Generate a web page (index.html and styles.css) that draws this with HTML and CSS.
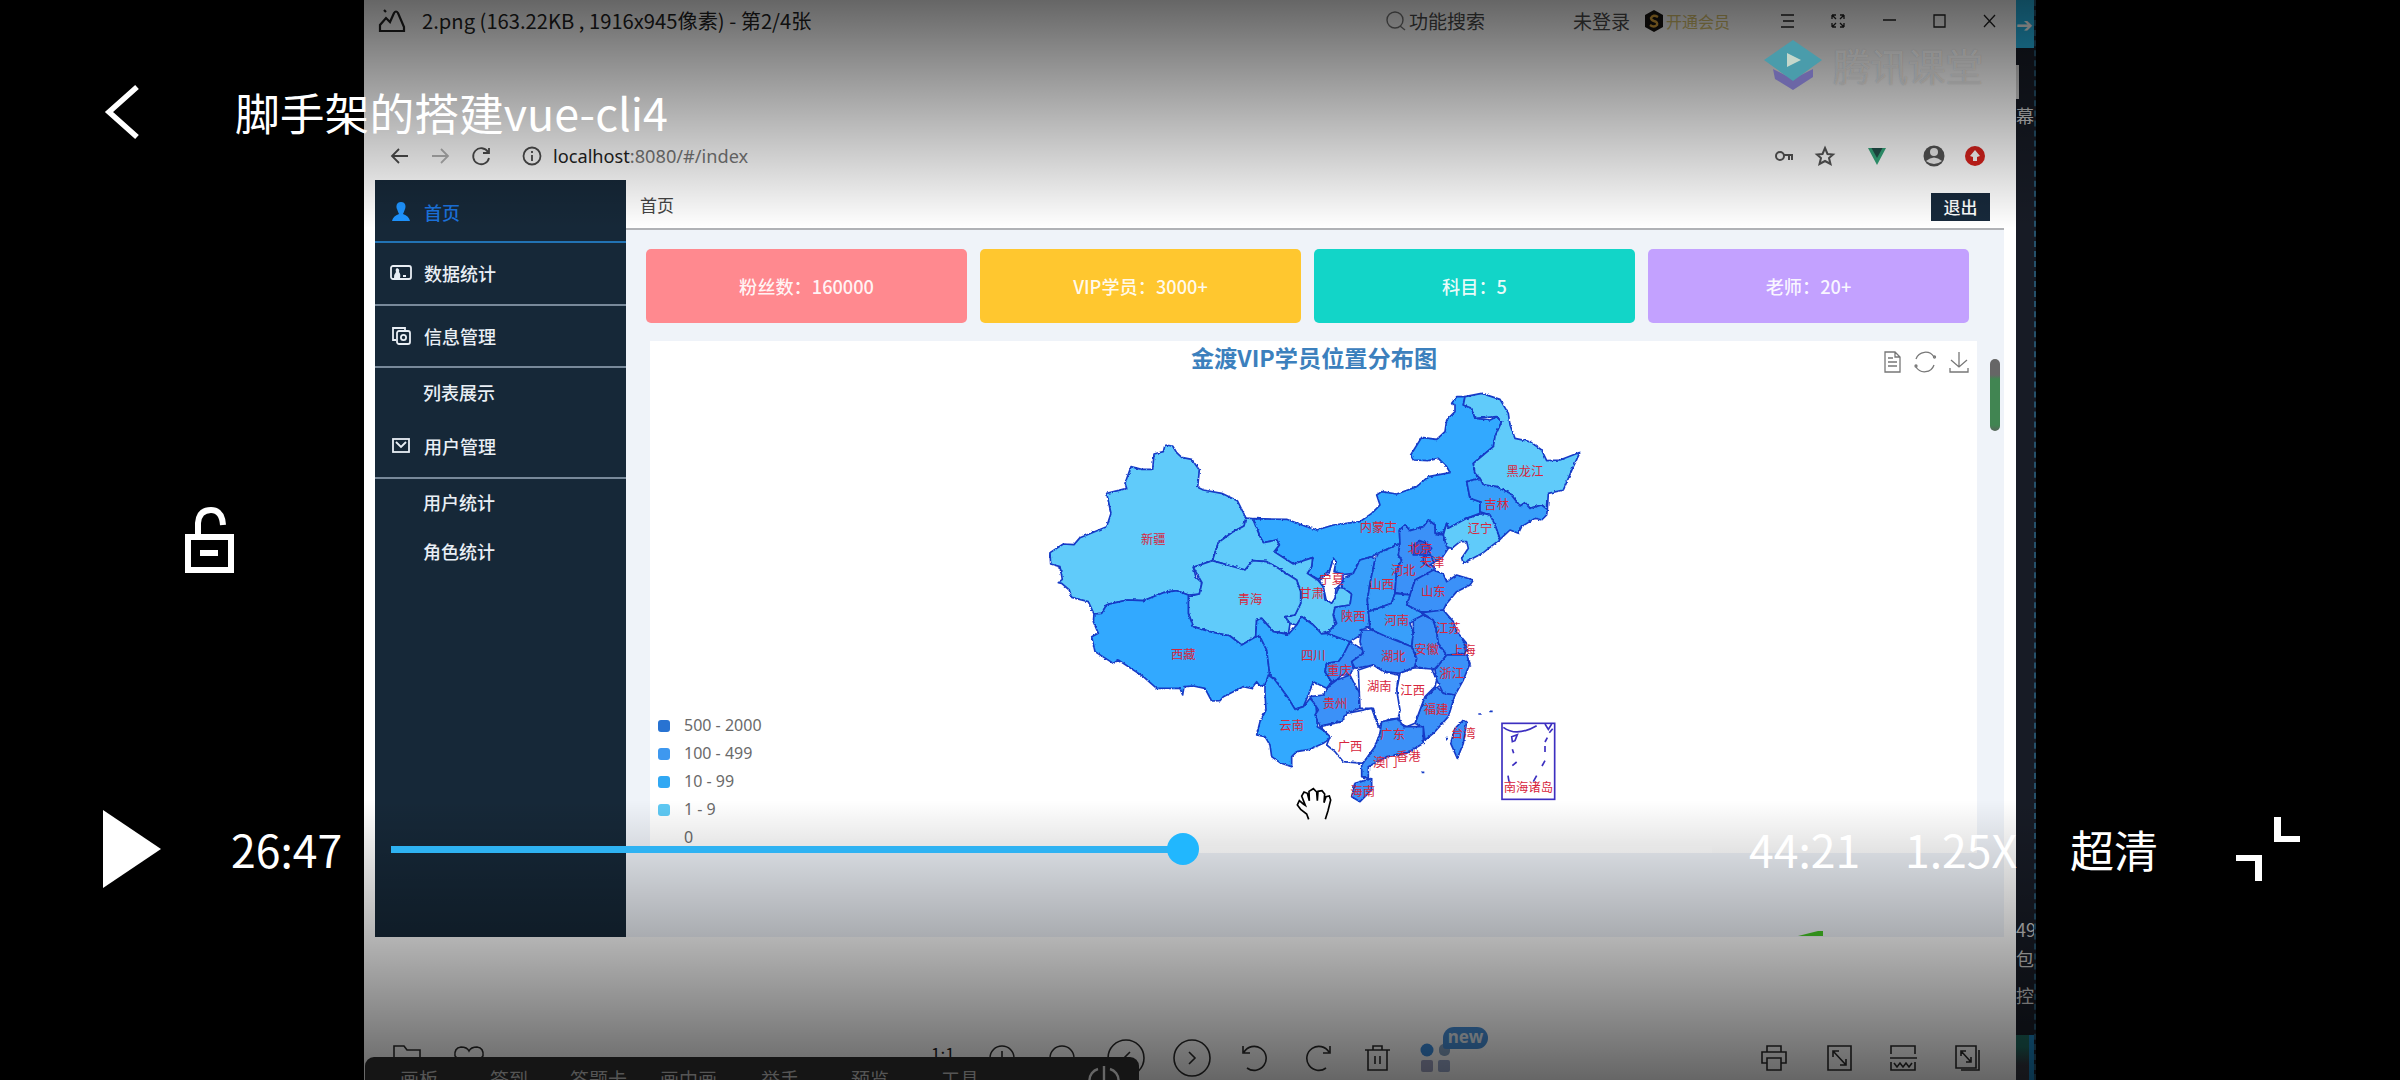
FILE: index.html
```
<!DOCTYPE html>
<html lang="zh-CN">
<head>
<meta charset="utf-8">
<title>脚手架的搭建vue-cli4</title>
<link rel="stylesheet" href="styles.css">
</head>
<body>
<div class="stage">
  <div class="video">
    <div class="viewer">
      <div class="titlebar">
        <svg class="logo" viewBox="0 0 28 28"><path d="M2 26V20L8 13L12 17L16 8Q18 5 20 8L26 22V26ZM6 5L8 7" /></svg>
        <span class="file-name">2.png (163.22KB , 1916x945像素) - 第2/4张</span>
        <svg class="ico search" viewBox="0 0 20 20"><circle cx="9" cy="9" r="8"/><path d="M14 15L19 19"/></svg>
        <span class="search-text">功能搜索</span>
        <span class="login">未登录</span>
        <svg class="coin" viewBox="0 0 20 22"><path d="M10 0L19 5V17L10 22L1 17V5Z" fill="#171411"/><path d="M14 7Q9 4 7 8Q7 10 10 11Q14 12 13 15Q10 18 6 15" fill="none" stroke="#e0a83c" stroke-width="2.4"/></svg>
        <span class="vip">开通会员</span>
        <svg class="win-icons" viewBox="0 0 216 20"><path d="M1 4H14M3 10H14M1 16H14M52 4L56 8M52 4h4M52 4v4M64 4L60 8M64 4h-4M64 4v4M52 16L56 12M52 16h4M52 16v-4M64 16L60 12M64 16h-4M64 16v-4M103 9H116M154 4H165V16H154ZM204 4L215 16M215 4L204 16"/></svg>
      </div>
      <div class="browser-bar">
        <svg class="nav-icons" viewBox="0 0 152 24"><path d="M17 12H2M8 5L1 12L8 19"/><path class="dim" d="M41 12H56M50 5L57 12L50 19"/><path d="M97 8A8 8 0 1 0 98 14M98 4V9H92"/><circle cx="141" cy="12" r="8.5"/><path d="M141 11V17M141 7V9"/></svg>
        <span class="url"><b>localhost</b>:8080/#/index</span>
        <svg class="ext-icons" viewBox="0 0 212 26">
          <g class="line"><circle cx="6" cy="13" r="4"/><path d="M10 12H18V17M15 13V17"/><path d="M51 5L53.500 11L59 11.500L55 15L56.500 21L51 18L45.500 21L47 15L43 11.500L48.500 11Z"/></g>
          <path d="M94 5H99L103 12L107 5H112L103 22Z" fill="#35a87c"/><path d="M97.500 5H108.500L103 15Z" fill="#22504a"/>
          <circle cx="160" cy="13" r="10.500" fill="#555"/><circle cx="160" cy="9" r="4" fill="#eee"/><path d="M152 18Q160 11 168 18Q160 24 152 18" fill="#eee"/>
          <circle cx="201" cy="13" r="10" fill="#d9221d"/><path d="M201 7L206 13L203 14V18H199V14L196 13Z" fill="#fff"/>
        </svg>
      </div>
      <div class="app">
        <nav class="sidebar">
          <div class="item active"><svg viewBox="0 0 20 20"><path class="solid" d="M10 0C15 0 15 5 14 7Q13 10 12 12Q18 14 19 19H1Q2 14 8 12Q7 10 6 7C5 5 5 0 10 0"/></svg>首页</div>
          <div class="item"><svg viewBox="0 0 20 20"><rect x="0" y="3" width="20" height="13" rx="2"/><path class="solid" d="M6 5Q9 6 8 9Q10 11 9 15H3Q3 11 5 9Q4 6 6 5M12 12H15V14H12"/></svg>数据统计</div>
          <div class="item"><svg viewBox="0 0 20 20"><path d="M5 14H2V2H14V5"/><rect x="6" y="5" width="13" height="13" rx="2"/><circle cx="12.500" cy="11.500" r="2.600"/></svg>信息管理</div>
          <div class="sub first">列表展示</div>
          <div class="item mail"><svg viewBox="0 0 20 20"><rect x="2" y="3" width="16" height="13"/><path d="M5 6L10 11L15 6"/></svg>用户管理</div>
          <div class="sub second">用户统计</div>
          <div class="sub third">角色统计</div>
        </nav>
        <main class="main">
          <header class="head"><span>首页</span><button class="logout">退出</button></header>
          <section class="content">
            <div class="cards">
              <div class="card pink">粉丝数：160000</div>
              <div class="card yellow">VIP学员：3000+</div>
              <div class="card teal">科目：5</div>
              <div class="card purple">老师：20+</div>
            </div>
            <div class="chart">
              <div class="chart-head">
                <h2>金渡VIP学员位置分布图</h2>
                <svg class="toolbox" viewBox="0 0 86 24"><path d="M2 2H12L17 7V22H2ZM12 2V7H17M5 8H10M5 12H14M5 16H14"/><path d="M33 9A10 10 0 0 1 51 7M51 15A10 10 0 0 1 33 17"/><circle cx="51.500" cy="7" r="1"/><circle cx="33" cy="16" r="1"/><path d="M76 2V17M68 10L76 17L84 10M67 18V22H85V18"/></svg>
              </div>
              <div class="chart-body">
                <ul class="legend">
                  <li><i class="l1"></i>500 - 2000</li>
                  <li><i class="l2"></i>100 - 499</li>
                  <li><i class="l3"></i>10 - 99</li>
                  <li><i class="l4"></i>1 - 9</li>
                  <li><i></i>0</li>
                </ul>
                <svg class="map" viewBox="0 30 1740 1290">
                  <defs><filter id="coast" x="-2%" y="-2%" width="104%" height="104%"><feTurbulence type="fractalNoise" baseFrequency="0.11" numOctaves="2" seed="4"/><feDisplacementMap in="SourceGraphic" scale="8" xChannelSelector="R" yChannelSelector="G"/></filter></defs>
                  <g class="regions" filter="url(#coast)">
                    <path class="mid" d="M670 446L770 448 830 470 860 480 910 465 990 455 1025 430 1050 405 1040 375 1055 365 1100 372 1160 350 1195 320 1260 308 1250 290 1225 265 1195 272 1150 270 1142 255 1175 202 1220 208 1245 185 1250 150 1275 125 1275 105 1265 100 1280 80 1305 80 1300 105 1325 115 1335 145 1380 150 1400 140 1415 155 1395 200 1390 230 1360 255 1330 280 1335 310 1350 325 1310 335 1320 385 1350 395 1350 430 1310 445 1255 475 1250 460 1240 490 1215 490 1215 465 1195 450 1180 470 1140 482 1125 465 1108 480 1110 520 1045 550 1025 560 990 570 970 610 930 615 915 605 910 565 900 600 865 628 832 610 845 590 848 563 790 582 732 545 748 525 740 510 700 518 690 500Z"/>
                    <path class="low" d="M405 225L428 228 440 248 455 262 485 268 508 300 503 352 520 360 575 370 622 392 648 444 642 468 610 485 565 518 547 572 490 592 498 622 516 638 508 672 475 675 440 662 400 668 340 692 292 690 230 704 215 730 192 732 175 695 125 682 118 660 95 640 85 638 97 628 90 590 62 582 60 548 100 522 132 524 150 503 230 470 243 430 230 370 290 355 285 340 303 290 335 298 368 298 372 252 400 245Z"/>
                    <path class="low" d="M648 444L668 446 690 500 700 518 740 510 748 525 732 545 790 582 848 563 845 590 832 610 865 632 880 650 885 690 905 697 915 685 925 652 950 655 965 672 960 705 915 712 910 735 915 765 895 785 875 792 850 765 815 740 800 765 780 760 765 740 795 735 812 700 812 665 800 630 745 595 710 575 668 572 645 600 547 572 565 518 610 485 642 468Z"/>
                    <path class="low" d="M547 572L645 600 668 572 710 575 745 595 800 630 812 665 812 700 795 735 765 740 780 762 775 792 730 785 695 745 680 748 677 800 635 825 600 798 540 785 490 770 475 730 475 680 508 672 516 638 490 592Z"/>
                    <path class="mid" d="M192 732L215 730 230 704 292 690 340 692 400 668 440 662 475 675 475 730 490 770 540 785 600 798 635 825 677 800 690 800 710 840 720 920 705 945 690 948 680 935 665 955 640 950 580 980 570 992 545 993 525 955 490 948 462 950 458 975 450 955 380 955 340 920 265 870 250 880 195 845 185 800 205 790 190 755Z"/>
                    <path class="mid" d="M677 800L680 748 695 745 730 785 775 793 800 765 815 740 850 765 875 792 890 790 960 815 940 855 925 875 890 880 885 905 905 935 890 955 850 935 835 975 820 1010 795 1018 775 985 750 950 735 925 720 920 710 840 690 800Z"/>
                    <path class="mid" d="M705 945L715 915 735 930 750 950 775 985 795 1018 820 1010 840 985 858 1005 862 1070 895 1090 900 1105 880 1120 840 1138 800 1145 785 1160 785 1190 750 1178 725 1160 720 1125 705 1100 680 1095 690 1055 708 1020 705 970Z"/>
                    <path class="high" d="M960 815L1000 840 995 855 965 875 970 895 960 915 935 915 920 930 905 935 885 905 890 880 925 875 940 855Z"/>
                    <path class="high" d="M900 945L920 930 960 915 975 945 990 970 990 1015 950 1030 935 1055 870 1068 855 1035 865 1020 840 980 880 975Z"/>
                    <path class="warm" d="M1025 560L990 570 970 610 940 625 935 650 965 672 960 705 915 712 910 735 920 760 890 790 960 815 1000 790 990 780 1020 770 1015 725 1012 690 1020 640 1035 570Z"/>
                    <path class="warm" d="M1045 550L1110 520 1105 555 1115 570 1100 600 1095 670 1085 700 1015 725 1012 690 1020 640 1035 570Z"/>
                    <path class="high" d="M1110 520L1108 480 1125 465 1140 482 1180 470 1195 450 1215 465 1215 490 1240 495 1255 535 1235 565 1205 580 1215 600 1155 630 1140 675 1095 668 1100 600 1115 570 1105 555Z"/>
                    <path class="top" d="M1145 530L1170 512 1190 520 1205 535 1185 555 1150 555Z"/>
                    <path class="high" d="M1180 560L1200 552 1212 578 1195 588 1180 580Z"/>
                    <path class="none" d="M910 565L918 575 912 605 940 612 935 640 918 655 915 685 905 700 888 688 880 650 868 632 897 610Z"/>
                    <path class="low" d="M1305 80L1355 70 1410 88 1435 130 1440 165 1455 205 1500 215 1535 240 1550 272 1590 270 1650 247 1630 290 1600 360 1555 370 1552 418 1535 405 1500 415 1485 398 1470 408 1440 370 1400 350 1360 345 1350 325 1335 310 1330 280 1390 230 1395 200 1415 155 1400 140 1335 145 1325 115 1300 105Z"/>
                    <path class="warm" d="M1350 325L1360 345 1400 350 1440 370 1470 408 1485 398 1500 415 1535 405 1552 418 1550 435 1535 450 1515 445 1475 470 1465 490 1440 480 1410 508 1395 465 1380 435 1350 425 1350 395 1320 385 1310 335Z"/>
                    <path class="low" d="M1255 475L1310 445 1360 430 1380 435 1395 465 1410 508 1360 548 1300 580 1295 565 1315 535 1310 515 1290 515 1265 535 1250 530 1240 495 1250 460Z"/>
                    <path class="high" d="M1155 630L1210 600 1240 612 1250 635 1280 615 1330 630 1320 645 1280 665 1250 700 1240 720 1200 728 1170 725 1130 705 1140 675Z"/>
                    <path class="warm" d="M1015 725L1085 700 1095 670 1140 675 1130 705 1170 725 1180 735 1140 760 1150 790 1145 830 1100 810 1060 800 1020 775Z"/>
                    <path class="high" d="M995 780L1025 780 1070 800 1145 830 1160 865 1155 890 1110 910 1060 905 1030 885 975 895 965 875 1000 850 990 815Z"/>
                    <path class="high" d="M1150 750L1180 735 1210 750 1220 785 1225 820 1250 855 1230 880 1210 900 1155 890 1160 865 1145 830 1150 790Z"/>
                    <path class="high" d="M1175 728L1240 720 1270 755 1280 785 1310 820 1305 850 1250 855 1225 820 1220 785 1210 750Z"/>
                    <path class="high" d="M1250 855L1310 855 1320 880 1300 930 1275 975 1240 970 1220 930 1215 900Z"/>
                    <path class="high" d="M1220 950L1240 970 1275 975 1255 1040 1210 1090 1185 1110 1180 1075 1155 1060 1180 990Z"/>
                    <path class="none" d="M1110 910L1155 893 1205 897 1220 930 1215 950 1185 980 1155 1060 1130 1070 1110 1060 1105 1020 1100 960Z"/>
                    <path class="none" d="M985 900L1030 885 1060 905 1105 915 1100 960 1110 1020 1105 1045 1075 1048 1045 1070 1030 1015 990 1015 988 970Z"/>
                    <path class="none" d="M870 1070L935 1055 950 1030 1025 1015 1045 1070 1055 1078 1035 1130 1000 1180 940 1175 915 1145 890 1125 900 1100Z"/>
                    <path class="high" d="M1055 1055L1105 1045 1120 1070 1180 1070 1180 1120 1130 1150 1070 1160 1015 1190 1015 1225 995 1220 995 1185 1035 1130 1050 1090Z"/>
                    <path class="high" d="M975 1240L1025 1225 1025 1260 990 1295 965 1280Z"/>
                    <path class="high" d="M1300 1050L1310 1055 1300 1120 1282 1165 1262 1120 1275 1075Z"/>
                    <path class="isle" d="M1295 800L1310 845M1312 870L1322 890M1345 1032h10M1378 1024h10M1175 1207h8M1248 1106h6"/>
                  </g>
                  <g class="inset"><rect x="1416" y="1060" width="158" height="228"/><path d="M1420 1072Q1460 1102 1520 1067M1545 1062L1555 1078 1565 1062M1445 1100L1462 1094 1455 1112 1447 1115ZM1447 1138L1451 1150M1447 1187L1460 1176M1434 1217L1437 1235M1510 1235L1520 1217M1536 1188L1545 1172M1545 1128V1146M1545 1116L1552 1103M1558 1088L1568 1076"/></g>
                  <g class="labels">
                    <text x="370" y="522">新疆</text><text x="660" y="702">青海</text><text x="845" y="684">甘肃</text><text x="1045" y="486">内蒙古</text><text x="1485" y="317">黑龙江</text><text x="1400" y="417">吉林</text><text x="1350" y="489">辽宁</text><text x="1170" y="550">北京</text><text x="1206" y="591">天津</text><text x="1120" y="616">河北</text><text x="905" y="642">宁夏</text><text x="1055" y="656">山西</text><text x="1210" y="679">山东</text><text x="970" y="752">陕西</text><text x="1100" y="764">河南</text><text x="1255" y="789">江苏</text><text x="1190" y="852">安徽</text><text x="1300" y="856">上海</text><text x="1265" y="924">浙江</text><text x="1090" y="872">湖北</text><text x="850" y="871">四川</text><text x="928" y="914">重庆</text><text x="460" y="866">西藏</text><text x="785" y="1079">云南</text><text x="915" y="1014">贵州</text><text x="1048" y="964">湖南</text><text x="1148" y="976">江西</text><text x="1218" y="1032">福建</text><text x="1088" y="1107">广东</text><text x="960" y="1144">广西</text><text x="1066" y="1192">澳门</text><text x="1135" y="1174">香港</text><text x="998" y="1277">海南</text><text x="1300" y="1104">台湾</text><text x="1495" y="1266">南海诸岛</text>
                  </g>
                  <path class="hand" d="M836 1348L830 1332 812 1318 802 1305 808 1292 820 1302 826 1306 815 1278 822 1266 832 1270 838 1292 837 1264 850 1256 860 1266 862 1292 864 1264 876 1262 884 1272 882 1298 888 1280 898 1278 902 1290 894 1322 886 1348"/>
                </svg>
              </div>
            </div>
            <div class="next-panel"><svg viewBox="0 0 26 6"><path d="M0 5L20 0H25V5Z" fill="#46c826"/></svg></div>
          </section>
          <div class="scroll-thumb"></div>
        </main>
      </div>
      <div class="tools">
        <svg class="tools-left" viewBox="0 0 92 28"><path d="M1 27V2H11L14 6H27V24M76 26L62 12Q61 4 68 3Q74 3 76 7Q78 3 84 3Q91 4 90 12Z"/></svg>
        <span class="ratio">1:1</span>
        <svg class="tools-mid" viewBox="0 0 402 40"><path d="M15 13V27M8 20H22M143 14L137 20L143 26M202 14L208 20L202 26"/><circle cx="15" cy="20" r="12"/><circle cx="75" cy="20" r="12"/><circle cx="139" cy="20" r="18"/><circle cx="205" cy="20" r="18"/><path d="M256 8V15H263M257 14A12 12 0 1 1 260 30M343 8V15H336M342 14A12 12 0 1 0 339 30M378 12H403M381 12V32H400V12M386 12V8H395V12M388 18V26M393 18V26"/></svg>
        <svg class="apps" viewBox="0 0 32 28"><circle cx="7" cy="6" r="6.500" fill="#3d8fe0"/><rect x="19" y="0" width="11" height="12" rx="5" fill="#87a5c5"/><rect x="1" y="16" width="12" height="12" rx="2" fill="#a0a4c4"/><rect x="18" y="16" width="12" height="12" rx="2" fill="#9baacd"/></svg>
        <span class="badge">new</span>
        <svg class="tools-right" viewBox="0 0 220 28"><path d="M6 8V2H20V8M6 19H1V8H25V19H20M6 14H20V26H6ZM67 2H90V26H67ZM72 7L85 21M72 13V7H78M85 15V21H79M130 10V2H154V10M129 14H156M130 18V26H154V18M133 19L136 23 139 19 142 23 145 19 148 23 151 19M195 2H215V24H195ZM218 6V26H200M200 7L210 18M200 12V7H205M210 13V18H205"/></svg>
      </div>
    </div>
    <div class="strip">
      <div class="strip-top">➔</div>
      <i></i>
      <span class="s1">幕</span><span class="s2">49</span><span class="s3">包</span><span class="s4">控</span>
      <div class="strip-end"></div>
    </div>
    <div class="scrim top-scrim"></div>
    <div class="scrim bottom-scrim"></div>
    <div class="watermark">
      <svg viewBox="0 0 60 52"><path d="M10 30L30 40L50 30V38L30 51L12 40Z" fill="#6c66a6"/><path d="M30 1L59 21L30 42L1 21Z" fill="#4a9cab"/><path d="M24 14L38 21L24 28Z" fill="#c5d7cb"/></svg>
      <span>腾讯课堂</span>
    </div>
    <div class="class-bar">
      <span>画板</span><span>签到</span><span>答题卡</span><span>画中画</span><span>举手</span><span>预览</span><span>工具</span>
      <svg viewBox="0 0 30 30"><path d="M15 1V18M9 4A12 12 0 0 0 9 27M21 4A12 12 0 0 1 21 27"/></svg>
    </div>
  </div>

  <div class="controls">
    <div class="top-controls">
      <svg class="back" viewBox="0 0 36 56"><path d="M32 3L4 28L32 53"/></svg>
      <h1>脚手架的搭建vue-cli4</h1>
    </div>
    <svg class="lock" viewBox="0 0 52 70"><rect x="4" y="32" width="43" height="33"/><path d="M14 32V18Q15 5 27 5Q38 5 39 20"/><path d="M16 48H34"/></svg>
    <div class="bottom-controls">
      <svg class="play" viewBox="0 0 58 78"><path d="M0 0L58 39L0 78Z"/></svg>
      <span class="now">26:47</span>
      <div class="track"><div class="played"></div><div class="knob"></div></div>
      <span class="total">44:21</span>
      <span class="speed">1.25X</span>
      <span class="quality">超清</span>
      <svg class="shrink" viewBox="0 0 64 64"><path d="M38 0H45V19H64V25H38ZM0 38H26V64H19V44H0Z"/></svg>
    </div>
  </div>
</div>
</body>
</html>
```

FILE: styles.css
```
* { box-sizing: border-box; }
body { margin: 0; background: #000; font-family: "Noto Sans CJK SC", "Noto Sans", sans-serif; }
svg { display: block; flex: none; overflow: visible; }
.stage { position: relative; width: 2400px; height: 1080px; overflow: hidden; background: #000; }
.video { position: relative; display: flex; width: 1672px; height: 1080px; margin-left: 364px; overflow: hidden; }
.viewer { display: flex; flex-direction: column; width: 1652px; height: 1080px; background: #fff; }
.viewer, .strip { flex: none; }

/* image viewer title bar */
.titlebar { display: flex; align-items: center; height: 41px; padding-left: 14px; font-size: 19px; color: #3a3a3a; white-space: nowrap; }
.titlebar span { flex: none; line-height: 39px; }
.logo { width: 28px; height: 28px; margin-top: -4px; fill: none; stroke: #222; stroke-width: 2.2; }
.file-name { width: 980px; padding-left: 16px; font-size: 20.2px; color: #222; }
.ico { width: 20px; height: 20px; fill: none; stroke: #777; stroke-width: 1.4; }
.search-text { width: 167px; padding-left: 3px; color: #4a4a4a; }
.login { width: 71px; color: #4a4a4a; }
.coin { width: 20px; height: 22px; }
.vip { width: 116px; padding-left: 2px; font-size: 16px; color: #d9c470; }
.titlebar .vip { line-height: 36px; }
.win-icons { width: 216px; height: 20px; fill: none; stroke: #222; stroke-width: 1.3; }

/* browser address row */
.browser-bar { display: flex; align-items: center; height: 49px; margin-top: 90px; padding-left: 27px; color: #777; }
.nav-icons { width: 152px; height: 24px; fill: none; stroke: #4c4c4c; stroke-width: 1.8; }
.nav-icons .dim { stroke: #b2b2b2; }
.url { width: 1231px; padding-left: 10px; line-height: 30px; font-family: "Noto Sans", sans-serif; font-size: 18.2px; }
.url b { font-weight: 400; color: #222; }
.ext-icons { width: 212px; height: 26px; }
.ext-icons .line { fill: none; stroke: #555; stroke-width: 2; }

/* dashboard */
.app { display: flex; width: 1640px; height: 757px; margin-left: 11px; }
.sidebar { flex: none; width: 251px; background: #162838; color: #e9eff5; font-size: 18px; font-weight: 500; }
.item { display: flex; align-items: center; gap: 13px; height: 62.500px; padding-left: 16px; border-bottom: 2px solid #78899a; line-height: 26px; }
.item svg { width: 20px; height: 20px; fill: none; stroke: #e8eef4; stroke-width: 1.8; }
.item .solid { fill: #e8eef4; stroke: none; }
.item.active { height: 63px; padding-top: 2px; color: #1b72dc; border-color: #2273b4; }
.item.active .solid { fill: #1e94ff; }
.item.mail { height: 63px; padding-bottom: 1px; }
.sub { height: 48px; padding-left: 48px; line-height: 48px; }
.sub.second { line-height: 47px; }
.main { position: relative; flex: none; width: 1378px; background: #eff3f9; }
.head { display: flex; justify-content: space-between; align-items: center; height: 50px; padding: 2px 14px 0 14px; border-bottom: 2px solid #b0b2b6; background: #fff; color: #444; font-size: 17px; }
.head span { padding-bottom: 2px; }
.logout { width: 59px; height: 28px; margin-top: 3px; padding: 0; border: 0; background: #17293b; color: #fff; font: 500 17px/26px "Noto Sans CJK SC", sans-serif; }
.content { padding: 18.500px 24px 0 19px; }
.cards { display: grid; grid-template-columns: repeat(4, 321px); gap: 13px; padding-left: 1px; }
.card { height: 74px; border-radius: 5px; color: rgba(255,255,255,.92); font-size: 18.2px; font-weight: 500; line-height: 75px; text-align: center; }
.pink { background: #ff898f; }
.yellow { background: #ffc72f; }
.teal { background: #12d5c8; }
.purple { background: #c3a1ff; }
.chart { width: 1327px; height: 512px; margin: 18.500px 0 0 5px; background: #fff; }
.chart-head { display: grid; grid-template-columns: 1fr 86px; height: 39px; padding-right: 8px; }
.chart-head h2 { margin: 0 0 0 95px; color: #3c80bd; font-size: 23.200px; font-weight: 700; line-height: 33px; text-align: center; }
.toolbox { width: 86px; height: 24px; margin-top: 9px; fill: none; stroke: #777; stroke-width: 1.3; }
.chart-body { display: flex; height: 473px; }
.legend { align-self: flex-end; width: 380px; margin: 0; padding: 0 0 2px 8px; list-style: none; color: #6a6a6a; font: 16px/28px "Noto Sans", sans-serif; }
.legend li { display: flex; align-items: center; gap: 14px; height: 28px; }
.legend i { width: 12px; height: 12px; margin-top: 2px; border-radius: 3px; }
.l1 { background: #2873d2; }
.l2 { background: #3e98ef; }
.l3 { background: #31a8f3; }
.l4 { background: #5ec9f4; }
.map { width: 580px; height: 430px; }
.regions path { stroke: #173bc6; stroke-width: 5; stroke-linejoin: round; }
.low { fill: #60cbfa; }
.mid { fill: #31a9ff; }
.warm { fill: #379ffa; }
.high { fill: #3b91f8; }
.top { fill: #365cd5; }
.none { fill: #fff; }
.isle { fill: none; stroke-width: 8; }
.inset { fill: none; stroke: #3c2fc0; stroke-width: 5; }
.labels { fill: #d7263d; font-size: 37px; text-anchor: middle; }
.hand { fill: #fff; stroke: #000; stroke-width: 5; }
.next-panel { display: flex; justify-content: flex-end; align-items: flex-end; height: 84px; padding-right: 156px; }
.next-panel svg { width: 26px; height: 6px; }
.scroll-thumb { position: absolute; top: 179px; right: 4px; width: 10px; height: 72px; border-radius: 5px; background: linear-gradient(#666 0 16px, #418552 20px 66px, #58665b); }

/* viewer bottom tools */
.tools { display: flex; align-items: center; height: 40px; margin-top: 101px; padding-left: 29px; }
.tools svg { fill: none; stroke: #2c2c2c; stroke-width: 1.6; }
.tools-left { width: 92px; height: 28px; }
.ratio { width: 56px; margin-left: 446px; color: #222; font-size: 17px; line-height: 28px; margin-top: -8px; }
.tools-mid { width: 402px; height: 40px; }
.tools .apps { width: 32px; height: 28px; margin-left: 31px; stroke: none; }
.badge { width: 45px; height: 22px; margin: -40px 0 0 -9px; border-radius: 11px 11px 11px 3px; background: #468fd8; color: #dfe7ee; font: 700 17px/20px "Noto Sans", sans-serif; text-align: center; }
.tools-right { width: 220px; height: 28px; margin-left: 273px; }

/* desktop sliver beside the viewer */
.strip { position: relative; width: 20px; height: 1080px; overflow: hidden; border-right: 2px dashed #25506a; background: #171b25; color: #c8c8c8; font-size: 18px; }
.strip-top { height: 48px; background: #28b4e4; color: #fff; font-size: 20px; line-height: 48px; }
.strip i { display: block; width: 3px; height: 34px; margin-top: 17px; background: #ccc; }
.strip span { display: block; height: 28px; line-height: 28px; white-space: nowrap; }
.strip .s1 { margin-top: 2px; }
.strip .s2 { margin-top: 786px; }
.strip .s3 { margin-top: 1px; }
.strip .s4 { margin-top: 9px; }
.strip-end { height: 80px; margin-top: 26px; border-right: 5px solid #1a7fba; background: linear-gradient(#1d655b 12px, #343640 30px); }

.scrim { position: absolute; left: 0; width: 1672px; }
.top-scrim { top: 0; height: 228px; background: linear-gradient(rgba(0,0,0,.6), rgba(0,0,0,0)); }
.bottom-scrim { bottom: 0; height: 280px; background: linear-gradient(rgba(0,0,0,0), rgba(0,0,0,.6)); }
.watermark { position: absolute; top: 39px; left: 1399px; display: flex; gap: 10px; color: rgba(205,205,205,.36); font-size: 37.500px; line-height: 52px; text-shadow: 0 0 1px rgba(90,90,90,.6); }
.watermark svg { width: 60px; height: 52px; }
.class-bar { position: absolute; left: 1px; top: 1057px; display: flex; width: 774px; height: 40px; padding: 10px 21px 0 35px; border-radius: 9px 9px 0 0; background: #151515; color: #555; font-size: 19px; line-height: 24px; }
.class-bar span { flex: none; width: 90px; }
.class-bar span:nth-child(2) { width: 80px; }
.class-bar span:nth-child(4) { width: 101px; }
.class-bar span:nth-child(7) { width: 148px; }
.class-bar svg { width: 30px; height: 30px; margin-top: -2px; fill: none; stroke: #666; stroke-width: 2.4; }

/* player controls over the picture */
.controls { position: absolute; inset: 0; display: flex; flex-direction: column; color: #fff; }
.top-controls { display: flex; align-items: center; gap: 94px; height: 66px; margin-top: 79px; padding-left: 105px; }
.top-controls h1 { margin: 0; font-size: 44.800px; font-weight: 400; line-height: 66px; white-space: nowrap; }
.back { width: 36px; height: 56px; fill: none; stroke: #fff; stroke-width: 5.500; }
.lock { width: 52px; height: 70px; margin: 360px 0 0 184px; fill: none; stroke: #fff; stroke-width: 6; }
.bottom-controls { display: flex; align-items: center; height: 80px; margin-top: 234px; padding-left: 103px; font-size: 44.500px; line-height: 78px; }
.play { width: 58px; height: 78px; fill: #fff; }
.now { width: 160px; margin-left: 70px; }
.track { position: relative; width: 1321px; height: 7px; background: rgba(235,235,235,.25); }
.played { width: 792px; height: 7px; background: #2eb2f2; }
.knob { position: absolute; top: -13px; left: 776px; width: 32px; height: 32px; border-radius: 50%; background: #21b7fe; }
.total { width: 156px; margin-left: 37px; }
.speed { width: 165px; }
.quality { width: 166px; font-size: 44px; }
.shrink { width: 64px; height: 64px; fill: #fff; }
```
